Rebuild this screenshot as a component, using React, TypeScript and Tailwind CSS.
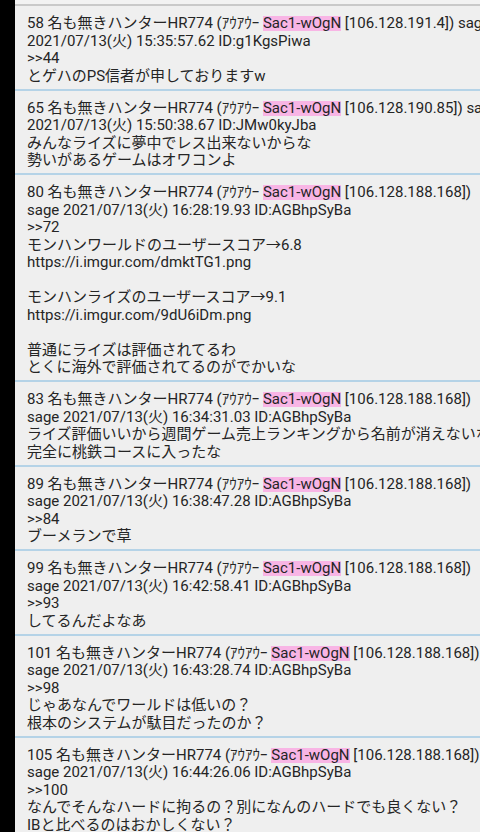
import React from "react";

type Post = {
  no: number;
  ip: string;
  date: string;
  id: string;
  sageInline?: boolean;
  body: string[];
};

const posts: Post[] = [
  {
    no: 58,
    ip: "106.128.191.4",
    date: "2021/07/13(火) 15:35:57.62",
    id: "g1KgsPiwa",
    sageInline: true,
    body: [">>44", "とゲハのPS信者が申しておりますw"],
  },
  {
    no: 65,
    ip: "106.128.190.85",
    date: "2021/07/13(火) 15:50:38.67",
    id: "JMw0kyJba",
    sageInline: true,
    body: ["みんなライズに夢中でレス出来ないからな", "勢いがあるゲームはオワコンよ"],
  },
  {
    no: 80,
    ip: "106.128.188.168",
    date: "2021/07/13(火) 16:28:19.93",
    id: "AGBhpSyBa",
    body: [
      ">>72",
      "モンハンワールドのユーザースコア→6.8",
      "https://i.imgur.com/dmktTG1.png",
      "",
      "モンハンライズのユーザースコア→9.1",
      "https://i.imgur.com/9dU6iDm.png",
      "",
      "普通にライズは評価されてるわ",
      "とくに海外で評価されてるのがでかいな",
    ],
  },
  {
    no: 83,
    ip: "106.128.188.168",
    date: "2021/07/13(火) 16:34:31.03",
    id: "AGBhpSyBa",
    body: ["ライズ評価いいから週間ゲーム売上ランキングから名前が消えないな", "完全に桃鉄コースに入ったな"],
  },
  {
    no: 89,
    ip: "106.128.188.168",
    date: "2021/07/13(火) 16:38:47.28",
    id: "AGBhpSyBa",
    body: [">>84", "ブーメランで草"],
  },
  {
    no: 99,
    ip: "106.128.188.168",
    date: "2021/07/13(火) 16:42:58.41",
    id: "AGBhpSyBa",
    body: [">>93", "してるんだよなあ"],
  },
  {
    no: 101,
    ip: "106.128.188.168",
    date: "2021/07/13(火) 16:43:28.74",
    id: "AGBhpSyBa",
    body: [">>98", "じゃあなんでワールドは低いの？", "根本のシステムが駄目だったのか？"],
  },
  {
    no: 105,
    ip: "106.128.188.168",
    date: "2021/07/13(火) 16:44:26.06",
    id: "AGBhpSyBa",
    body: [">>100", "なんでそんなハードに拘るの？別になんのハードでも良くない？", "IBと比べるのはおかしくない？"],
  },
];

function Line({ children }: { children?: React.ReactNode }) {
  return <div className="h-[17.5px] whitespace-nowrap">{children}</div>;
}

function PostBlock({ post, first }: { post: Post; first: boolean }) {
  return (
    <div
      className={
        first
          ? "border-t-2 border-[#c9c9c9] pt-[9px] pb-[3.5px] pl-[12px]"
          : "border-t-2 border-[#b5d3e7] pt-[9px] pb-[3.5px] pl-[12px]"
      }
    >
      <Line>
        {post.no} 名も無きハンターHR774 (ｱｳｱｳｰ{" "}
        <span className="inline-block bg-[#f8b5e5] leading-[15px]">Sac1-wOgN</span> [{post.ip}])
        {post.sageInline ? " sage" : ""}
      </Line>
      <Line>
        {post.sageInline ? "" : "sage "}
        {post.date} ID:{post.id}
      </Line>
      {post.body.map((l, i) => (
        <Line key={i}>{l}</Line>
      ))}
    </div>
  );
}

export default function App() {
  return (
    <div className="flex h-[832px] w-[480px] overflow-hidden bg-black">
      <div className="w-[15px] shrink-0 bg-black" />
      <div
        className="flex-1 overflow-hidden bg-[#efefef] text-[15px] leading-[17.5px] text-[#252525]"
        style={{ fontFamily: "Roboto, 'Noto Sans CJK JP', sans-serif" }}
      >
        <div className="h-[4px] bg-[#f2f2f2]" />
        {posts.map((p, i) => (
          <PostBlock key={p.no} post={p} first={i === 0} />
        ))}
      </div>
    </div>
  );
}
